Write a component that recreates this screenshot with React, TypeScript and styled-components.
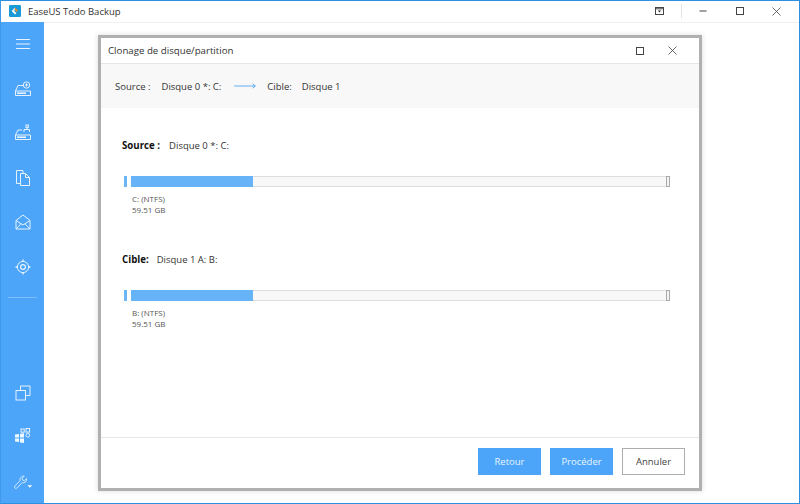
import React from "react";
import styled, { createGlobalStyle } from "styled-components";

const Global = createGlobalStyle`
  html, body { margin: 0; padding: 0; background: #fff; }
  body { font-family: "Open Sans", "Noto Sans", sans-serif; }
`;

const Window = styled.div`
  width: 800px;
  height: 504px;
  box-sizing: border-box;
  border: 1px solid #2b90e2;
  border-left-color: #3c9ae8;
  display: flex;
  flex-direction: column;
  overflow: hidden;
  background: #fff;
`;

const TitleBar = styled.div`
  height: 21px;
  flex: none;
  box-sizing: border-box;
  display: flex;
  align-items: center;
  padding: 0 4px 1px 8px;
  background: #fff;
`;

const AppName = styled.span`
  margin-left: 7px;
  font-size: 9.5px;
  color: #333;
  flex: 1;
`;

const WinControls = styled.div`
  display: flex;
  align-items: center;
  height: 100%;
`;

const CtrlButton = styled.div`
  width: 37px;
  height: 100%;
  display: flex;
  align-items: center;
  justify-content: center;
`;

const Divider = styled.div`
  width: 1px;
  height: 14px;
  background: #e4e4e4;
  margin: 0 2px 0 17px;
`;

const Content = styled.div`
  flex: 1;
  display: flex;
  min-height: 0;
`;

const Sidebar = styled.nav`
  width: 43px;
  flex: none;
  background: #4ca5f8;
  display: flex;
  flex-direction: column;
  align-items: center;
  padding-top: 12px;
  box-sizing: border-box;
`;

const NavIcon = styled.div<{ $mb?: number }>`
  width: 20px;
  height: 20px;
  margin-bottom: ${({ $mb }) => $mb ?? 24.5}px;
  display: flex;
  align-items: center;
  justify-content: center;
`;

const Rule = styled.div`
  width: 29px;
  height: 1px;
  background: #7bbcf9;
`;

const Spacer = styled.div`
  flex: 1;
`;

const Main = styled.main`
  flex: 1;
  display: flex;
  align-items: flex-start;
  padding: 12px 0 0 54px;
  border-top: 1px solid #f0f0f0;
`;

const Dialog = styled.section`
  width: 604px;
  height: 456px;
  box-sizing: border-box;
  border: 3px solid #b0b0b0;
  box-shadow: 0 0 4px 1px rgba(0, 0, 0, 0.1);
  background: #fff;
  display: flex;
  flex-direction: column;
`;

const DialogHead = styled.header`
  height: 26px;
  flex: none;
  box-sizing: border-box;
  border-bottom: 1px solid #e6e6e6;
  display: flex;
  align-items: center;
  padding: 0 10px 0 7px;
`;

const DialogTitle = styled.span`
  flex: 1;
  font-size: 9.7px;
  color: #333;
`;

const DialogCtrl = styled.div`
  width: 33px;
  height: 100%;
  display: flex;
  align-items: center;
  justify-content: center;
`;

const Crumbs = styled.div`
  height: 44px;
  flex: none;
  background: #f8f8f8;
  display: flex;
  align-items: center;
  padding-left: 14px;
  font-size: 9.5px;
  color: #333;
`;

const Crumb = styled.span<{ $ml?: number }>`
  margin-left: ${({ $ml }) => $ml ?? 0}px;
  display: flex;
`;

const Body = styled.div`
  flex: 1;
  padding: 30px 21px 0 21px;
  display: flex;
  flex-direction: column;
`;

const DiskBlock = styled.div`
  height: 114px;
  flex: none;
`;

const DiskTitle = styled.div`
  display: flex;
  align-items: center;
  height: 14px;
  font-size: 9.5px;
  color: #333;
`;

const DiskLabel = styled.strong<{ $gap: number }>`
  font-size: 9.7px;
  font-weight: 700;
  color: #111;
  margin-right: ${({ $gap }) => $gap}px;
`;

const BarRow = styled.div`
  display: flex;
  align-items: stretch;
  height: 11px;
  margin: 24px 0 0 2px;
`;

const Tick = styled.div`
  width: 3px;
  background: #6cb6f6;
  margin-right: 4px;
`;

const Track = styled.div`
  width: 536px;
  box-sizing: border-box;
  background: #f8f8f8;
  border: 1px solid #dedede;
  display: flex;
`;

const Fill = styled.div<{ $w: number }>`
  width: ${({ $w }) => $w}px;
  margin: -1px 0 -1px -1px;
  background: #66b3f7;
`;

const EndCap = styled.div`
  width: 4px;
  margin-left: -1px;
  box-sizing: border-box;
  border: 1px solid #a9a9a9;
  background: #f4f4f4;
`;

const PartInfo = styled.div`
  margin: 6px 0 0 10px;
  font-size: 8px;
  line-height: 11px;
  color: #555;
`;

const Footer = styled.footer`
  height: 51px;
  flex: none;
  box-sizing: border-box;
  border-top: 1px solid #e6e6e6;
  display: flex;
  justify-content: flex-end;
  align-items: flex-start;
  gap: 9px;
  padding: 10px 14px 0 0;
`;

const Button = styled.button<{ $ghost?: boolean }>`
  width: 63px;
  height: 27px;
  padding: 0;
  box-sizing: border-box;
  font-family: inherit;
  font-size: 9.5px;
  color: ${({ $ghost }) => ($ghost ? "#444" : "#e8f4ff")};
  background: ${({ $ghost }) => ($ghost ? "#fff" : "#4ca5f8")};
  border: ${({ $ghost }) => ($ghost ? "1px solid #adadad" : "none")};
`;

const Logo = () => (
  <svg width="12" height="12" viewBox="0 0 14 14">
    <rect width="14" height="14" rx="1.5" fill="#1a9bd7" />
    <path d="M7 3 L10.5 6.8 L9 8.2 L7 6 Z" fill="#f08a24" />
    <path d="M7 3 L3.2 7 L7 11 L8.6 9.5 L6.2 7 Z" fill="#fff" />
  </svg>
);

const line = { fill: "none", stroke: "#e6f3ff", strokeWidth: 1 };

const Menu = () => (
  <svg width="16" height="12" viewBox="0 0 16 12" {...line}>
    <path d="M1 1.5h14M1 6h14M1 10.5h14" />
  </svg>
);

const DiskA = () => (
  <svg width="18" height="18" viewBox="0 0 18 18" {...line}>
    <path d="M1.5 11 L4 5.5 H9" />
    <path d="M1.5 11 H16.5 V15.5 H1.5 Z" />
    <path d="M3 13.2h9" strokeWidth="1.6" />
    <circle cx="12.5" cy="5" r="3.2" />
    <path d="M12.5 3.4v3.2M11 5h3" />
  </svg>
);

const DiskB = () => (
  <svg width="18" height="18" viewBox="0 0 18 18" {...line}>
    <path d="M1.5 11 L4 6 H8" />
    <path d="M1.5 11 H16.5 V15.5 H1.5 Z" />
    <path d="M3 13.2h9" strokeWidth="1.6" />
    <path d="M10 8 V5.5 H13 V3.5 M13 5.5 H15.5 V8" />
    <rect x="12" y="1" width="2.4" height="2.4" />
  </svg>
);

const Files = () => (
  <svg width="16" height="18" viewBox="0 0 16 18" {...line}>
    <path d="M5 14.5 H1.5 V1.5 H8 V4" />
    <path d="M5.5 4.5 H10.5 L14.5 8.5 V16.5 H5.5 Z" />
    <path d="M10.5 4.5 V8.5 H14.5" />
  </svg>
);

const Mail = () => (
  <svg width="16" height="16" viewBox="0 0 16 16" {...line}>
    <path d="M1 6.5 L8 1 L15 6.5 V15 H1 Z" />
    <path d="M1 6.5 L8 11 L15 6.5 M1 15 L6 9.8 M15 15 L10 9.8" />
  </svg>
);

const Target = () => (
  <svg width="16" height="16" viewBox="0 0 16 16" {...line}>
    <circle cx="8" cy="8" r="5.6" />
    <circle cx="8" cy="8" r="2.4" strokeWidth="1.2" />
    <path d="M8 0.5v2M8 13.5v2M0.5 8h2M13.5 8h2" strokeWidth="1.4" />
  </svg>
);

const Copies = () => (
  <svg width="16" height="16" viewBox="0 0 16 16" {...line}>
    <rect x="1" y="5.5" width="9.5" height="9.5" />
    <path d="M5.5 5.5 V1 H15 V10.5 H10.5" />
  </svg>
);

const Tiles = () => (
  <svg width="17" height="16" viewBox="0 0 17 16">
    <path d="M1 6.5 L5 6 V9.5 H1 Z M6 5.8 L10 5.2 V9.5 H6 Z M1 10.5 H5 V14 L1 13.5 Z M6 10.5 H10 V15 L6 14.4 Z" fill="#f0f8ff" />
    <g {...line}>
      <rect x="7" y="1" width="3.2" height="3.2" />
      <rect x="12" y="0.5" width="3.6" height="3.6" />
      <rect x="12" y="5.5" width="3.6" height="3.6" rx="1.6" />
    </g>
  </svg>
);

const Wrench = () => (
  <svg width="24" height="18" viewBox="0 0 24 18" {...line}>
    <path d="M2 14 L8.5 7.5 C7.7 4.5 10 1.5 13.5 2 L11 4.6 L11.6 6.8 L13.8 7.4 L16.4 4.9 C16.9 8.4 14 10.6 10.9 9.9 L4.4 16.4 C3 17.4 1 15.4 2 14 Z" />
    <path d="M17.5 13 H23 L20.25 15.8 Z" fill="#fff" stroke="none" />
  </svg>
);

const Dropdown = () => (
  <svg width="9" height="8" viewBox="0 0 9 8">
    <rect x="0.5" y="0.5" width="8" height="7" fill="none" stroke="#444" />
    <path d="M0.5 1.8h8" stroke="#444" />
    <path d="M2.8 3.4 H6.2 L4.5 5.4 Z" fill="#333" />
  </svg>
);

const Minimize = () => (
  <svg width="8" height="8" viewBox="0 0 8 8">
    <path d="M0.5 4h7" stroke="#444" />
  </svg>
);

const Square = () => (
  <svg width="8" height="8" viewBox="0 0 8 8">
    <rect x="0.5" y="0.5" width="7" height="7" fill="none" stroke="#444" />
  </svg>
);

const Close = () => (
  <svg width="9" height="9" viewBox="0 0 9 9">
    <path d="M0.5 0.5 L8.5 8.5 M8.5 0.5 L0.5 8.5" stroke="#444" strokeWidth="0.8" />
  </svg>
);

const Arrow = () => (
  <svg width="22" height="6" viewBox="0 0 22 6">
    <path d="M0 3h21M18.5 0.8 L21.5 3 L18.5 5.2" fill="none" stroke="#3b9cf0" strokeWidth="0.8" />
  </svg>
);

const Disk = ({ label, gap, value, part }: { label: string; gap: number; value: string; part: string }) => (
  <DiskBlock>
    <DiskTitle>
      <DiskLabel $gap={gap}>{label}</DiskLabel>
      {value}
    </DiskTitle>
    <BarRow>
      <Tick />
      <Track>
        <Fill $w={122} />
      </Track>
      <EndCap />
    </BarRow>
    <PartInfo>
      {part}
      <br />
      59.51 GB
    </PartInfo>
  </DiskBlock>
);

export default function App() {
  return (
    <>
      <Global />
      <Window>
        <TitleBar>
          <Logo />
          <AppName>EaseUS Todo Backup</AppName>
          <WinControls>
            <Dropdown />
            <Divider />
            <CtrlButton>
              <Minimize />
            </CtrlButton>
            <CtrlButton>
              <Square />
            </CtrlButton>
            <CtrlButton>
              <Close />
            </CtrlButton>
          </WinControls>
        </TitleBar>
        <Content>
          <Sidebar>
            <NavIcon><Menu /></NavIcon>
            <NavIcon><DiskA /></NavIcon>
            <NavIcon><DiskB /></NavIcon>
            <NavIcon><Files /></NavIcon>
            <NavIcon><Mail /></NavIcon>
            <NavIcon $mb={20}><Target /></NavIcon>
            <Rule />
            <Spacer />
            <NavIcon $mb={23}><Copies /></NavIcon>
            <NavIcon $mb={25.5}><Tiles /></NavIcon>
            <NavIcon $mb={11.5}><Wrench /></NavIcon>
          </Sidebar>
          <Main>
            <Dialog>
              <DialogHead>
                <DialogTitle>Clonage de disque/partition</DialogTitle>
                <DialogCtrl><Square /></DialogCtrl>
                <DialogCtrl><Close /></DialogCtrl>
              </DialogHead>
              <Crumbs>
                <Crumb>Source :</Crumb>
                <Crumb $ml={11}>Disque 0 *: C:</Crumb>
                <Crumb $ml={13}><Arrow /></Crumb>
                <Crumb $ml={11}>Cible:</Crumb>
                <Crumb $ml={10}>Disque 1</Crumb>
              </Crumbs>
              <Body>
                <Disk label="Source :" gap={9} value="Disque 0 *: C:" part="C: (NTFS)" />
                <Disk label="Cible:" gap={8} value="Disque 1 A: B:" part="B: (NTFS)" />
              </Body>
              <Footer>
                <Button>Retour</Button>
                <Button>Procéder</Button>
                <Button $ghost>Annuler</Button>
              </Footer>
            </Dialog>
          </Main>
        </Content>
      </Window>
    </>
  );
}
